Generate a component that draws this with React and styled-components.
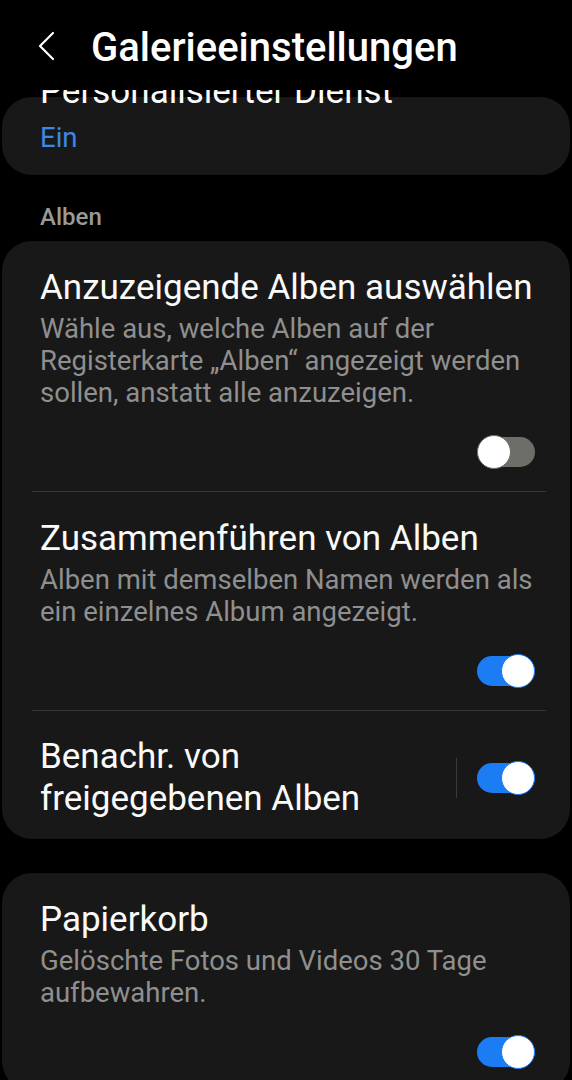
import React from "react";
import styled, { createGlobalStyle } from "styled-components";

const GlobalStyle = createGlobalStyle`
  body {
    margin: 0;
    background: #000;
    font-family: Roboto, "Noto Sans", "Liberation Sans", sans-serif;
    -webkit-font-smoothing: antialiased;
  }
`;

const Screen = styled.div`
  width: 572px;
  height: 1080px;
  overflow: hidden;
  background: #000;
  color: #fafafa;
`;

const Header = styled.header`
  position: relative;
  z-index: 2;
  height: 84px;
  padding: 6px 0 0 38px;
  background: #000;
  display: flex;
  align-items: center;
  gap: 35px;
`;

const Back = styled.button`
  border: none;
  background: none;
  padding: 0;
  margin-top: -4px;
  display: flex;
`;

const Title = styled.h1`
  margin: 0;
  font-size: 40px;
  line-height: 48px;
  font-weight: 500;
  color: #fff;
`;

const List = styled.main`
  padding: 7px 2px 0;
  display: flex;
  flex-direction: column;
`;

const Card = styled.section`
  background: #181818;
  border-radius: 30px;
  margin-bottom: ${(p) => p.$gap || 0}px;
`;

const SectionLabel = styled.div`
  padding: 28px 38px 10px;
  font-size: 24px;
  line-height: 28px;
  font-weight: 500;
  color: #9a9a9a;
`;

const Item = styled.div`
  padding: ${(p) => p.$pad || "27px 35px 24px 38px"};
  display: flex;
  flex-direction: ${(p) => (p.$inline ? "row" : "column")};
  align-items: ${(p) => (p.$inline ? "center" : "stretch")};
`;

const Texts = styled.div`
  flex: 1;
  display: flex;
  flex-direction: column;
`;

const ItemTitle = styled.div`
  font-size: 35px;
  line-height: ${(p) => p.$lh || 40}px;
  color: #fafafa;
  margin-top: ${(p) => p.$offset || 0}px;
`;

const Summary = styled.div`
  font-size: 27.5px;
  line-height: 32px;
  color: ${(p) => (p.$accent ? "#3d87e6" : "#8f8f8f")};
  margin-top: ${(p) => p.$top || 5}px;
`;

const SwitchLine = styled.div`
  display: flex;
  justify-content: flex-end;
  margin-top: 28px;
`;

const Divider = styled.hr`
  margin: 0 24px 0 30px;
  border: none;
  border-top: 1.5px solid #363636;
`;

const VRule = styled.div`
  width: 1px;
  height: 40px;
  background: #3a3a3a;
  margin-right: 20px;
`;

const Track = styled.div`
  width: 58px;
  height: 30px;
  border-radius: 15px;
  background: ${(p) => (p.$on ? "#1b7cf4" : "#6e6e68")};
  position: relative;
`;

const Thumb = styled.div`
  position: absolute;
  top: -2px;
  left: ${(p) => (p.$on ? "24px" : "0")};
  width: 34px;
  height: 34px;
  box-sizing: border-box;
  border-radius: 50%;
  background: #fff;
  border: 1.5px solid ${(p) => (p.$on ? "#1b7cf4" : "#6e6e68")};
`;

const Switch = ({ on }) => (
  <Track $on={on}>
    <Thumb $on={on} />
  </Track>
);

const BackIcon = () => (
  <svg width="18" height="32" viewBox="0 0 18 32" fill="none">
    <path d="M15 3 L2 16 L15 29" stroke="#fff" strokeWidth="2.2" strokeLinecap="round" strokeLinejoin="round" />
  </svg>
);

export default function App() {
  return (
    <Screen>
      <GlobalStyle />
      <Header>
        <Back aria-label="Zurück">
          <BackIcon />
        </Back>
        <Title>Galerieeinstellungen</Title>
      </Header>
      <List>
        <Card>
          <Item $pad="0 35px 21px 38px">
            <ItemTitle $offset={-25}>Personalisierter Dienst</ItemTitle>
            <Summary $accent $top={10}>Ein</Summary>
          </Item>
        </Card>
        <SectionLabel>Alben</SectionLabel>
        <Card $gap={34}>
          <Item>
            <Texts>
              <ItemTitle>Anzuzeigende Alben auswählen</ItemTitle>
              <Summary>
                Wähle aus, welche Alben auf der Registerkarte „Alben“ angezeigt werden sollen,
                anstatt alle anzuzeigen.
              </Summary>
            </Texts>
            <SwitchLine>
              <Switch on={false} />
            </SwitchLine>
          </Item>
          <Divider />
          <Item>
            <Texts>
              <ItemTitle>Zusammenführen von Alben</ItemTitle>
              <Summary>Alben mit demselben Namen werden als ein einzelnes Album angezeigt.</Summary>
            </Texts>
            <SwitchLine>
              <Switch on />
            </SwitchLine>
          </Item>
          <Divider />
          <Item $inline $pad="25px 35px 19px 38px">
            <Texts>
              <ItemTitle $lh={42}>
                Benachr. von
                <br />
                freigegebenen Alben
              </ItemTitle>
            </Texts>
            <VRule />
            <Switch on />
          </Item>
        </Card>
        <Card>
          <Item>
            <Texts>
              <ItemTitle>Papierkorb</ItemTitle>
              <Summary>Gelöschte Fotos und Videos 30 Tage aufbewahren.</Summary>
            </Texts>
            <SwitchLine>
              <Switch on />
            </SwitchLine>
          </Item>
        </Card>
      </List>
    </Screen>
  );
}
